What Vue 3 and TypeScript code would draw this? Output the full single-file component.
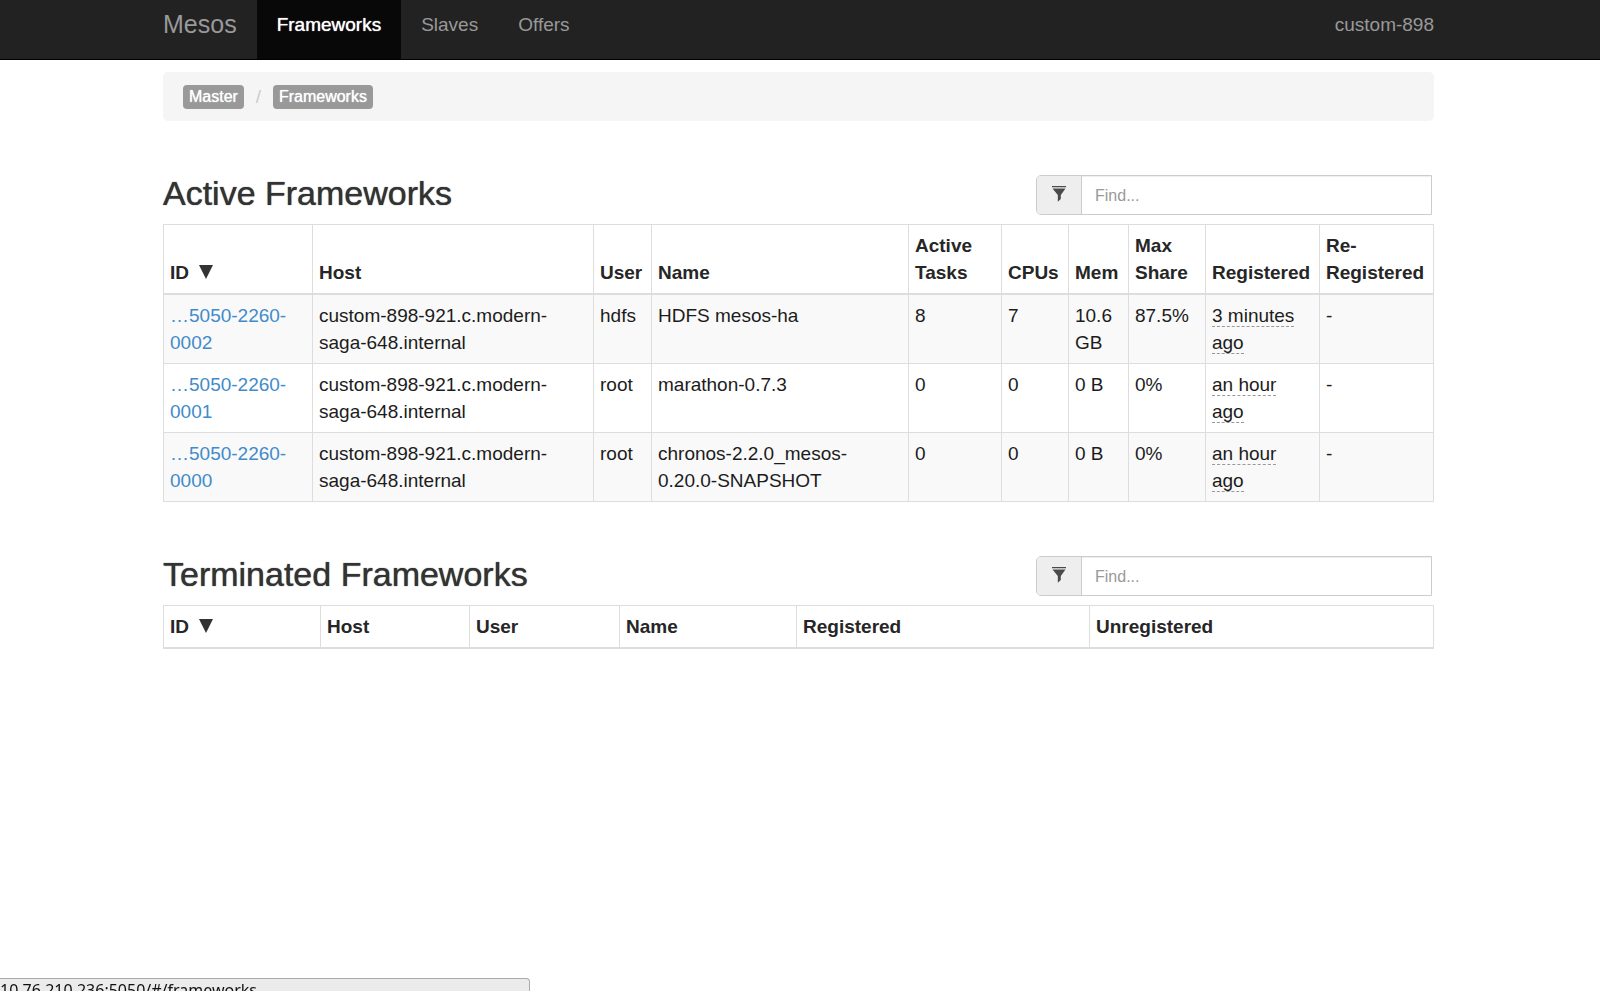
<script setup lang="ts">
import { computed, ref } from 'vue'

// Text that may wrap is kept as parts; a line may break between two parts.
interface Column {
  label: string[]
  share: number
  sorted?: boolean
}

interface Framework {
  id: string[]
  host: string[]
  user: string
  name: string[]
  activeTasks: number
  cpus: number
  mem: string
  maxShare: string
  registered: string
  reregistered: string
}

const cluster = 'custom-898'
const host = ['custom-898-921.c.modern-', 'saga-648.internal']

const activeColumns: Column[] = [
  { label: ['ID'], share: 149, sorted: true },
  { label: ['Host'], share: 281 },
  { label: ['User'], share: 58 },
  { label: ['Name'], share: 257 },
  { label: ['Active ', 'Tasks'], share: 93 },
  { label: ['CPUs'], share: 67 },
  { label: ['Mem'], share: 60 },
  { label: ['Max ', 'Share'], share: 77 },
  { label: ['Registered'], share: 114 },
  { label: ['Re-', 'Registered'], share: 114 },
]

const terminatedColumns: Column[] = [
  { label: ['ID'], share: 157, sorted: true },
  { label: ['Host'], share: 149 },
  { label: ['User'], share: 150 },
  { label: ['Name'], share: 177 },
  { label: ['Registered'], share: 293 },
  { label: ['Unregistered'], share: 344 },
]

const frameworks: Framework[] = [
  {
    id: ['…5050-2260-', '0002'], host, user: 'hdfs', name: ['HDFS mesos-ha'],
    activeTasks: 8, cpus: 7, mem: '10.6 GB', maxShare: '87.5%',
    registered: '3 minutes ago', reregistered: '-',
  },
  {
    id: ['…5050-2260-', '0001'], host, user: 'root', name: ['marathon-0.7.3'],
    activeTasks: 0, cpus: 0, mem: '0 B', maxShare: '0%',
    registered: 'an hour ago', reregistered: '-',
  },
  {
    id: ['…5050-2260-', '0000'], host, user: 'root', name: ['chronos-2.2.0_mesos-', '0.20.0-SNAPSHOT'],
    activeTasks: 0, cpus: 0, mem: '0 B', maxShare: '0%',
    registered: 'an hour ago', reregistered: '-',
  },
]

const activeQuery = ref('')
const terminatedQuery = ref('')
const descending = ref(true)

const visible = computed(() => {
  const q = activeQuery.value.toLowerCase()
  const rows = frameworks.filter((f) =>
    [f.id.join(''), f.host.join(''), f.user, f.name.join('')].join(' ').toLowerCase().includes(q),
  )
  return descending.value ? rows : rows.reverse()
})

function columnWidth(columns: Column[], column: Column): string {
  const total = columns.reduce((sum, c) => sum + c.share, 0)
  return `${(column.share / total) * 100}%`
}
</script>

<template>
  <div class="page">
    <header class="navbar">
      <nav class="container bar" aria-label="Main">
        <a class="brand" href="#/">Mesos</a>
        <a class="link active" href="#/frameworks" aria-current="page">Frameworks</a>
        <a class="link" href="#/slaves">Slaves</a>
        <a class="link" href="#/offers">Offers</a>
        <span class="cluster">{{ cluster }}</span>
      </nav>
    </header>

    <main class="container">
      <ol class="breadcrumb">
        <li><a class="badge" href="#/">Master</a></li>
        <li><a class="badge" href="#/frameworks">Frameworks</a></li>
      </ol>

      <section>
        <div class="heading">
          <h2>Active Frameworks</h2>
          <div class="filter">
            <label for="find-active" aria-label="Find active frameworks">
              <svg width="14" height="16" viewBox="0 0 14 16" aria-hidden="true">
                <path d="M0 0h14v1.2H0zM.5 2.4h13L8.8 9v4L5.8 15.8V9z" />
              </svg>
            </label>
            <input id="find-active" v-model="activeQuery" type="text" placeholder="Find..." />
          </div>
        </div>
        <table>
          <colgroup>
            <col v-for="c in activeColumns" :key="c.label.join('')" :style="{ width: columnWidth(activeColumns, c) }" />
          </colgroup>
          <thead>
            <tr>
              <th v-for="c in activeColumns" :key="c.label.join('')" scope="col">
                <button type="button" @click="descending = !descending">
                  <template v-for="part in c.label" :key="part">{{ part }}<wbr /></template>
                  <svg v-if="c.sorted" class="arrow" width="14" height="14" viewBox="0 0 14 14" aria-hidden="true">
                    <path d="M0 0h14L7 14z" />
                  </svg>
                </button>
              </th>
            </tr>
          </thead>
          <tbody>
            <tr v-for="f in visible" :key="f.id.join('')">
              <td>
                <a class="id" href="#/frameworks"><template v-for="part in f.id" :key="part">{{ part }}<wbr /></template></a>
              </td>
              <td><template v-for="part in f.host" :key="part">{{ part }}<wbr /></template></td>
              <td>{{ f.user }}</td>
              <td><template v-for="part in f.name" :key="part">{{ part }}<wbr /></template></td>
              <td>{{ f.activeTasks }}</td>
              <td>{{ f.cpus }}</td>
              <td>{{ f.mem }}</td>
              <td>{{ f.maxShare }}</td>
              <td><abbr>{{ f.registered }}</abbr></td>
              <td>{{ f.reregistered }}</td>
            </tr>
          </tbody>
        </table>
      </section>

      <section>
        <div class="heading">
          <h2>Terminated Frameworks</h2>
          <div class="filter">
            <label for="find-terminated" aria-label="Find terminated frameworks">
              <svg width="14" height="16" viewBox="0 0 14 16" aria-hidden="true">
                <path d="M0 0h14v1.2H0zM.5 2.4h13L8.8 9v4L5.8 15.8V9z" />
              </svg>
            </label>
            <input id="find-terminated" v-model="terminatedQuery" type="text" placeholder="Find..." />
          </div>
        </div>
        <table>
          <colgroup>
            <col v-for="c in terminatedColumns" :key="c.label.join('')" :style="{ width: columnWidth(terminatedColumns, c) }" />
          </colgroup>
          <thead>
            <tr>
              <th v-for="c in terminatedColumns" :key="c.label.join('')" scope="col">
                <button type="button">
                  <template v-for="part in c.label" :key="part">{{ part }}<wbr /></template>
                  <svg v-if="c.sorted" class="arrow" width="14" height="14" viewBox="0 0 14 14" aria-hidden="true">
                    <path d="M0 0h14L7 14z" />
                  </svg>
                </button>
              </th>
            </tr>
          </thead>
        </table>
      </section>
    </main>

    <div class="status">10.76.210.236:5050/#/frameworks</div>
  </div>
</template>

<style>
body {
  margin: 0;
  background: #fff;
}
</style>

<style scoped>
.page {
  min-height: 100vh;
  padding-right: 3px;
  box-sizing: border-box;
  font: 19px/27px "Liberation Sans", Arial, sans-serif;
  color: #1c1c1c;
}

.page a {
  text-decoration: none;
}

.container {
  max-width: 1271px;
  margin: 0 auto;
}

.navbar {
  margin-right: -3px;
  padding-right: 3px;
  background: #222;
  border-bottom: 1px solid #000;
}

.bar {
  display: flex;
}

.brand,
.link,
.cluster {
  padding: 11px 20px 21px;
  color: #999;
}

.brand {
  padding-left: 0;
  font-size: 25px;
}

.link.active {
  background: #080808;
  color: #fff;
  text-shadow: 0 0 1px #fff;
}

.cluster {
  margin-left: auto;
  padding-right: 0;
}

.breadcrumb {
  display: flex;
  margin: 12px 0 0;
  padding: 13px 20px 12px;
  border-radius: 5px;
  background: #f5f5f5;
  list-style: none;
}

.breadcrumb li {
  display: flex;
  align-items: center;
  line-height: 24px;
}

.breadcrumb li + li::before {
  content: "/";
  width: 29px;
  text-align: center;
  color: #ccc;
}

.badge {
  padding: 0 6px;
  border-radius: 4px;
  background: #999;
  color: #fff;
  font-size: 16px;
  text-shadow: 0 0 1px #fff;
}

section {
  margin-top: 54px;
}

.heading {
  display: flex;
  justify-content: space-between;
  align-items: flex-start;
  margin-bottom: 9px;
}

h2 {
  margin: 0;
  font-size: 34px;
  font-weight: 400;
  line-height: 36px;
  color: #333;
  text-shadow: 0 0 1px #333;
}

.filter {
  display: flex;
  box-sizing: border-box;
  width: 396px;
  height: 40px;
  margin-right: 2px;
  border: 1px solid #ccc;
  border-radius: 5px 0 0 5px;
  overflow: hidden;
}

.filter label {
  display: flex;
  justify-content: center;
  width: 44px;
  padding-top: 10px;
  border-right: 1px solid #ccc;
  background: #eee;
}

.filter svg {
  fill: #4a4a4a;
}

.filter input {
  flex: 1;
  min-width: 0;
  padding: 0 13px;
  border: 0;
  outline: 0;
  background: #fff;
  box-shadow: inset 0 1px 1px #eee;
  font: inherit;
  font-size: 16px;
  color: #555;
}

.filter input::placeholder {
  color: #999;
}

table {
  width: 100%;
  table-layout: fixed;
  border-collapse: collapse;
}

th,
td {
  padding: 7px 6px;
  border: 1px solid #ddd;
  text-align: left;
  vertical-align: top;
}

td {
  padding-right: 7px;
}

th {
  vertical-align: bottom;
  border-bottom-width: 2px;
}

th button {
  display: block;
  padding: 0;
  border: 0;
  background: none;
  font: inherit;
  font-weight: 700;
  text-align: left;
  color: #262626;
  cursor: pointer;
}

.arrow {
  margin-left: 10px;
  fill: #333;
}

tbody tr:nth-child(odd) {
  background: #f9f9f9;
}

.id {
  color: #428bca;
}

abbr {
  border-bottom: 1px dashed #999;
}

.status {
  position: fixed;
  left: 0;
  bottom: 0;
  box-sizing: border-box;
  width: 530px;
  height: 13px;
  overflow: hidden;
  border: 1px solid #aaa;
  border-width: 1px 1px 0 0;
  border-radius: 0 4px 0 0;
  background: #ebebeb;
  font: 16px/22px "Noto Sans", sans-serif;
  color: #111;
}
</style>
